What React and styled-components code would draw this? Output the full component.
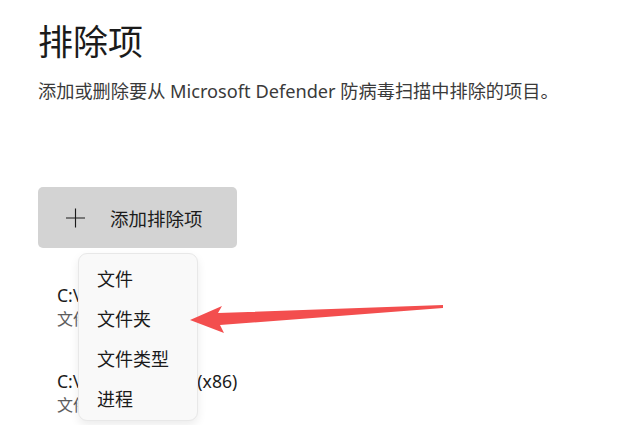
import React from "react";
import styled, { createGlobalStyle } from "styled-components";

const GlobalStyle = createGlobalStyle`
	body {
		margin: 0;
		background: #ffffff;
		font-family: "Noto Sans", "Noto Sans CJK SC", sans-serif;
		color: #1b1b1b;
	}
`;

const menuItems = ["文件", "文件夹", "文件类型", "进程"];

const exclusions = [
	{ path: "C:\\Windows", type: "文件夹" },
	{ path: "C:\\Program Files (x86)", type: "文件夹" },
];

const App = () => {
	return (
		<>
			<GlobalStyle />
			<Page>
				<Title>排除项</Title>
				<Subtitle>添加或删除要从 Microsoft Defender 防病毒扫描中排除的项目。</Subtitle>

				<AddArea>
					<AddButton>
						<PlusIcon viewBox="0 0 20 20">
							<path d="M10 0V20M0 10H20" stroke="#1b1b1b" strokeWidth="1.2" />
						</PlusIcon>
						<span>添加排除项</span>
					</AddButton>

					<Menu>
						{menuItems.map((item) => (
							<MenuItem key={item}>{item}</MenuItem>
						))}
					</Menu>
				</AddArea>

				<List>
					{exclusions.map((item) => (
						<Row key={item.path}>
							<Path>{item.path}</Path>
							<Kind>{item.type}</Kind>
						</Row>
					))}
				</List>

				<Arrow width="640" height="425" viewBox="0 0 640 425">
					<polygon
						points="190,320 222,306 218,313 443,305 443,308 220,325 224,333"
						fill="#f34e4e"
					/>
				</Arrow>
			</Page>
		</>
	);
};

export default App;

const Page = styled.div`
	position: relative;
	width: 640px;
	height: 425px;
	overflow: hidden;
	padding: 19px 0 0 38px;
	box-sizing: border-box;
`;

const Title = styled.h1`
	margin: 0;
	font-size: 35px;
	font-weight: 400;
	line-height: 46px;
	color: #1b1b1b;
`;

const Subtitle = styled.p`
	margin: 14px 0 0;
	font-size: 18.2px;
	line-height: 24px;
	color: #3a3a3a;
`;

const AddArea = styled.div`
	position: relative;
	margin-top: 84px;
	width: 199px;
`;

const AddButton = styled.div`
	display: flex;
	align-items: center;
	width: 199px;
	height: 61px;
	box-sizing: border-box;
	padding-left: 28px;
	gap: 25px;
	background: #d3d3d3;
	border-radius: 5px;
	font-size: 18.5px;
	color: #1b1b1b;
`;

const PlusIcon = styled.svg`
	width: 19px;
	height: 20px;
	flex-shrink: 0;
`;

const Menu = styled.div`
	position: absolute;
	z-index: 2;
	top: 66px;
	left: 40px;
	width: 120px;
	padding: 4px 0 2px;
	box-sizing: border-box;
	background: #f9f9f9;
	border: 1px solid #e8e8e8;
	border-radius: 9px;
	box-shadow: 0 4px 10px rgba(0, 0, 0, 0.08);
`;

const MenuItem = styled.div`
	height: 40px;
	display: flex;
	align-items: center;
	padding-left: 18px;
	font-size: 18px;
	color: #1b1b1b;
`;

const List = styled.div`
	display: flex;
	flex-direction: column;
	gap: 38px;
	margin-top: 35px;
	padding-left: 19px;
`;

const Row = styled.div`
	display: flex;
	flex-direction: column;
`;

const Path = styled.div`
	font-size: 17.6px;
	line-height: 24px;
	color: #1b1b1b;
`;

const Kind = styled.div`
	font-size: 16px;
	line-height: 24px;
	color: #5d5d5d;
`;

const Arrow = styled.svg`
	position: absolute;
	top: 0;
	left: 0;
	z-index: 3;
	pointer-events: none;
`;
